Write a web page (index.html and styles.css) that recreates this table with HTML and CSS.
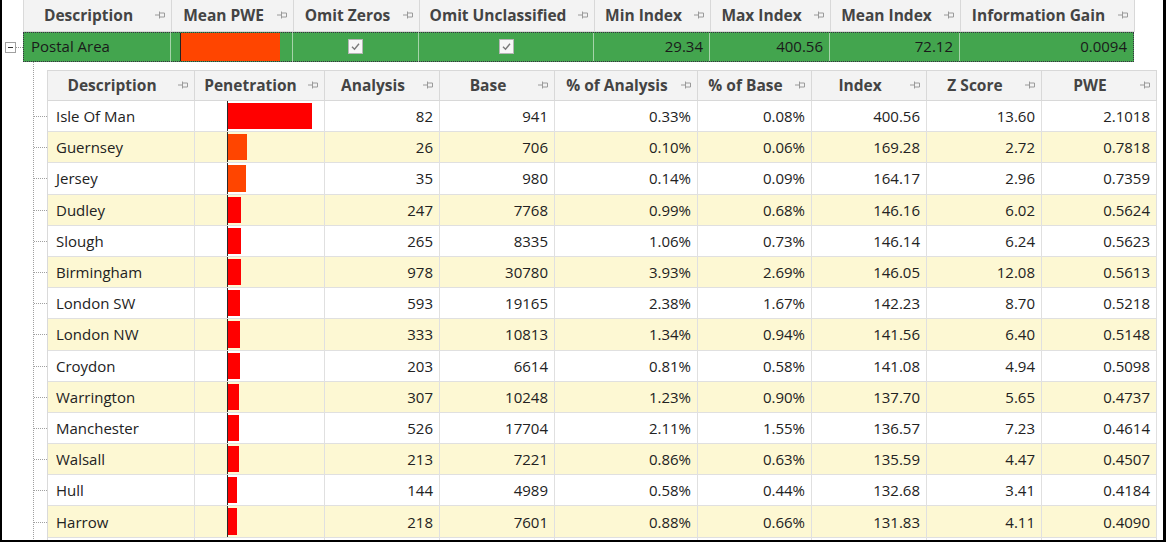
FILE: index.html
```html
<!DOCTYPE html>
<html>
<head>
<meta charset="utf-8">
<link rel="stylesheet" href="styles.css">
</head>
<body>
<div class="frame">
  <div class="master">
    <div class="gutter-top"></div>
    <div class="mgrid mhead">
      <div class="hc"><span class="ht">Description</span><svg class="pin" viewBox="0 0 11 8"><path d="M0 4H4M4.5 0.5V7.5M5 2H9.5V6H5"/></svg></div>
      <div class="hc"><span class="ht">Mean PWE</span><svg class="pin" viewBox="0 0 11 8"><path d="M0 4H4M4.5 0.5V7.5M5 2H9.5V6H5"/></svg></div>
      <div class="hc"><span class="ht">Omit Zeros</span><svg class="pin" viewBox="0 0 11 8"><path d="M0 4H4M4.5 0.5V7.5M5 2H9.5V6H5"/></svg></div>
      <div class="hc"><span class="ht">Omit Unclassified</span><svg class="pin" viewBox="0 0 11 8"><path d="M0 4H4M4.5 0.5V7.5M5 2H9.5V6H5"/></svg></div>
      <div class="hc"><span class="ht">Min Index</span><svg class="pin" viewBox="0 0 11 8"><path d="M0 4H4M4.5 0.5V7.5M5 2H9.5V6H5"/></svg></div>
      <div class="hc"><span class="ht">Max Index</span><svg class="pin" viewBox="0 0 11 8"><path d="M0 4H4M4.5 0.5V7.5M5 2H9.5V6H5"/></svg></div>
      <div class="hc"><span class="ht">Mean Index</span><svg class="pin" viewBox="0 0 11 8"><path d="M0 4H4M4.5 0.5V7.5M5 2H9.5V6H5"/></svg></div>
      <div class="hc"><span class="ht">Information Gain</span><svg class="pin" viewBox="0 0 11 8"><path d="M0 4H4M4.5 0.5V7.5M5 2H9.5V6H5"/></svg></div>
    </div>
  </div>
  <div class="master">
    <div class="gutter-row"><span class="expander"></span><span class="etick"></span></div>
    <div class="mgrid mrow">
      <div class="gc txt">Postal Area</div>
      <div class="gc barcell mbar"><span class="bar orange" style="width:99px"></span></div>
      <div class="gc ctr"><span class="chk"><svg viewBox="0 0 13 13"><path d="M3 6.8L5.5 9.2L10 3.8"/></svg></span></div>
      <div class="gc ctr"><span class="chk"><svg viewBox="0 0 13 13"><path d="M3 6.8L5.5 9.2L10 3.8"/></svg></span></div>
      <div class="gc num">29.34</div>
      <div class="gc num">400.56</div>
      <div class="gc num">72.12</div>
      <div class="gc num">0.0094</div>
    </div>
  </div>
  <div class="detail">
    <div class="drow dhead">
      <div class="tick none"></div>
      <div class="dgrid hrow">
        <div class="hc"><span class="ht">Description</span><svg class="pin" viewBox="0 0 11 8"><path d="M0 4H4M4.5 0.5V7.5M5 2H9.5V6H5"/></svg></div>
        <div class="hc"><span class="ht">Penetration</span><svg class="pin" viewBox="0 0 11 8"><path d="M0 4H4M4.5 0.5V7.5M5 2H9.5V6H5"/></svg></div>
        <div class="hc"><span class="ht">Analysis</span><svg class="pin" viewBox="0 0 11 8"><path d="M0 4H4M4.5 0.5V7.5M5 2H9.5V6H5"/></svg></div>
        <div class="hc"><span class="ht">Base</span><svg class="pin" viewBox="0 0 11 8"><path d="M0 4H4M4.5 0.5V7.5M5 2H9.5V6H5"/></svg></div>
        <div class="hc"><span class="ht">% of Analysis</span><svg class="pin" viewBox="0 0 11 8"><path d="M0 4H4M4.5 0.5V7.5M5 2H9.5V6H5"/></svg></div>
        <div class="hc"><span class="ht">% of Base</span><svg class="pin" viewBox="0 0 11 8"><path d="M0 4H4M4.5 0.5V7.5M5 2H9.5V6H5"/></svg></div>
        <div class="hc"><span class="ht">Index</span><svg class="pin" viewBox="0 0 11 8"><path d="M0 4H4M4.5 0.5V7.5M5 2H9.5V6H5"/></svg></div>
        <div class="hc"><span class="ht">Z Score</span><svg class="pin" viewBox="0 0 11 8"><path d="M0 4H4M4.5 0.5V7.5M5 2H9.5V6H5"/></svg></div>
        <div class="hc"><span class="ht">PWE</span><svg class="pin" viewBox="0 0 11 8"><path d="M0 4H4M4.5 0.5V7.5M5 2H9.5V6H5"/></svg></div>
      </div>
    </div>
    <div id="rows"></div>
  </div>
</div>
<script src="app.js"></script>
</body>
</html>
```

FILE: app.js
```js
const data = [
  ["Isle Of Man", 82, 941, "0.33%", "0.08%", "400.56", "13.60", "2.1018", 84, "red"],
  ["Guernsey", 26, 706, "0.10%", "0.06%", "169.28", "2.72", "0.7818", 19, "orange"],
  ["Jersey", 35, 980, "0.14%", "0.09%", "164.17", "2.96", "0.7359", 18, "orange"],
  ["Dudley", 247, 7768, "0.99%", "0.68%", "146.16", "6.02", "0.5624", 13, "red"],
  ["Slough", 265, 8335, "1.06%", "0.73%", "146.14", "6.24", "0.5623", 13, "red"],
  ["Birmingham", 978, 30780, "3.93%", "2.69%", "146.05", "12.08", "0.5613", 13, "red"],
  ["London SW", 593, 19165, "2.38%", "1.67%", "142.23", "8.70", "0.5218", 12, "red"],
  ["London NW", 333, 10813, "1.34%", "0.94%", "141.56", "6.40", "0.5148", 12, "red"],
  ["Croydon", 203, 6614, "0.81%", "0.58%", "141.08", "4.94", "0.5098", 12, "red"],
  ["Warrington", 307, 10248, "1.23%", "0.90%", "137.70", "5.65", "0.4737", 11, "red"],
  ["Manchester", 526, 17704, "2.11%", "1.55%", "136.57", "7.23", "0.4614", 11, "red"],
  ["Walsall", 213, 7221, "0.86%", "0.63%", "135.59", "4.47", "0.4507", 11, "red"],
  ["Hull", 144, 4989, "0.58%", "0.44%", "132.68", "3.41", "0.4184", 9, "red"],
  ["Harrow", 218, 7601, "0.88%", "0.66%", "131.83", "4.11", "0.4090", 9, "red"],
  ["", "", "", "", "", "", "", "", 0, "red"]
];
const host = document.getElementById("rows");
data.forEach((r, i) => {
  const row = document.createElement("div");
  row.className = "drow";
  const alt = i % 2 === 1 ? " alt" : "";
  let cells = `<div class="gc txt">${r[0]}</div>`;
  cells += `<div class="gc barcell pbar">${r[8] ? `<span class="bar ${r[9]}" style="width:${r[8]}px"></span>` : ""}</div>`;
  for (let k = 1; k <= 7; k++) cells += `<div class="gc num">${r[k]}</div>`;
  row.innerHTML = `<div class="tick"></div><div class="dgrid drow-cells${alt}">${cells}</div>`;
  host.appendChild(row);
});
```

FILE: styles.css
```css
html, body {
  margin: 0;
  padding: 0;
  background: #fff;
}
body {
  font-family: "Open Sans", "Noto Sans", sans-serif;
  font-size: 15px;
  color: #222;
}
.frame {
  width: 1166px;
  height: 542px;
  box-sizing: border-box;
  border-left: 2px solid #000;
  border-right: 3px solid #000;
  border-bottom: 2px solid #000;
  overflow: hidden;
  background: #fff;
}
.master {
  display: flex;
}
.gutter-top {
  width: 21px;
  flex: none;
}
.gutter-row {
  width: 21px;
  flex: none;
  display: flex;
  align-items: center;
}
.expander {
  width: 9px;
  height: 9px;
  margin-left: 3px;
  border: 1px solid #a0a0a0;
  background: #fff;
  flex: none;
  display: flex;
  align-items: center;
  justify-content: center;
}
.expander::before {
  content: "";
  width: 5px;
  height: 1px;
  background: #333;
}
.etick {
  flex: 1;
  height: 1px;
  background: repeating-linear-gradient(to right, #999 0 1px, transparent 1px 2px);
}
.mgrid {
  display: grid;
  grid-template-columns: 148px 122px 126px 175px 116px 120px 130px 174px;
}
.mhead {
  height: 32px;
  background: #f3f3f3;
  border-left: 1px solid #dadada;
  box-sizing: border-box;
}
.hc {
  display: flex;
  align-items: center;
  border-right: 1px solid #d8d8d8;
  border-bottom: 1px solid #d8d8d8;
  padding: 0 5px 2px 0;
  box-sizing: border-box;
  min-width: 0;
}
.ht {
  flex: 1;
  text-align: center;
  font-weight: 700;
  font-size: 15.5px;
  color: #444;
  white-space: nowrap;
  padding-right: 2px;
}
.pin {
  width: 11px;
  height: 8px;
  flex: none;
  fill: none;
  stroke: #9a9a9a;
  stroke-width: 1;
}
.mrow {
  height: 30px;
  background: #43a54e;
  box-sizing: border-box;
  outline: 1px dotted #3b2b45;
  outline-offset: -1px;
}
.mrow .gc {
  border-right: 1px solid #a6d4aa;
  color: #1a1a1a;
  padding-bottom: 2px;
}
.mrow .gc.barcell {
  padding-bottom: 1px;
}
.mrow .gc:last-child {
  border-right: 1px dotted #3b2b45;
}
.gc {
  display: flex;
  align-items: center;
  box-sizing: border-box;
  white-space: nowrap;
  overflow: hidden;
  min-width: 0;
}
.txt {
  padding-left: 8px;
}
.num {
  justify-content: flex-end;
  padding-right: 6px;
}
.ctr {
  justify-content: center;
}
.chk {
  width: 15px;
  height: 15px;
  box-sizing: border-box;
  border: 1px solid #b5b5b5;
  background: #f7f7f7;
  display: flex;
}
.chk svg {
  width: 13px;
  height: 13px;
  fill: none;
  stroke: #7a7a7a;
  stroke-width: 1.4;
}
.barcell {
  align-items: stretch;
}
.mbar {
  padding: 1px 0 1px 9px;
}
.pbar {
  padding: 0 0 0 32px;
}
.bar {
  display: block;
  border-left: 1px solid #2a2a2a;
  flex: none;
}
.mbar .bar {
  background: #ff4500;
  border-left-color: #222;
}
.pbar .bar {
  background-clip: content-box;
  padding: 2px 0 2px 0;
}
.bar.red {
  background-color: #ff0000;
}
.bar.orange {
  background-color: #ff4500;
}
.detail {
  padding-top: 8px;
  background: repeating-linear-gradient(to bottom, #a0a0a0 0 1px, transparent 1px 2px) 31px 0 / 1px 100% no-repeat;
}
.drow {
  display: flex;
}
.tick {
  width: 45px;
  flex: none;
  background: repeating-linear-gradient(to right, #a0a0a0 0 1px, transparent 1px 2px) 32px 50% / 13px 1px no-repeat;
}
.tick.none {
  background: none;
}
.dgrid {
  display: grid;
  grid-template-columns: 147px 130px 115px 115px 143px 114px 115px 115px 115px;
  border-left: 1px solid #dadada;
  box-sizing: border-box;
}
.hrow {
  height: 31px;
  background: #f3f3f3;
  border-top: 1px solid #d8d8d8;
}
.drow-cells {
  height: 31.2px;
  background: #fff;
}
.drow-cells.alt {
  background: #fdf8d3;
}
.drow-cells .gc {
  border-right: 1px solid #e0e0e0;
  border-bottom: 1px solid #e0e0e0;
}
```
